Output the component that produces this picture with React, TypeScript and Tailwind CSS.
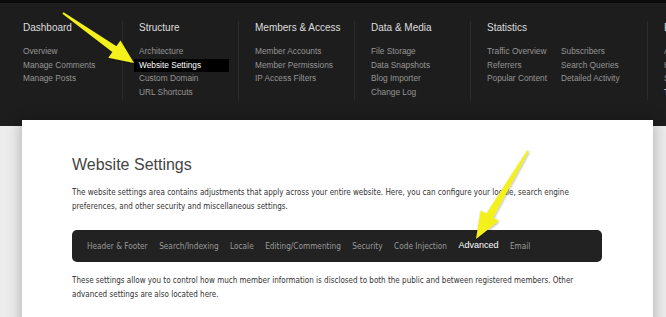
import React from 'react'

type Pt = [number, number]

const menu = [
  { title: 'Dashboard', width: 'w-[116px]', cols: [['Overview', 'Manage Comments', 'Manage Posts']] },
  { title: 'Structure', width: 'w-[116px]', cols: [['Architecture', 'Website Settings', 'Custom Domain', 'URL Shortcuts']] },
  { title: 'Members & Access', width: 'w-[116px]', cols: [['Member Accounts', 'Member Permissions', 'IP Access Filters']] },
  { title: 'Data & Media', width: 'w-[116px]', cols: [['File Storage', 'Data Snapshots', 'Blog Importer', 'Change Log']] },
  {
    title: 'Statistics',
    width: 'w-[177px]',
    cols: [
      ['Traffic Overview', 'Referrers', 'Popular Content'],
      ['Subscribers', 'Search Queries', 'Detailed Activity'],
    ],
  },
  { title: 'Extras', width: 'w-[116px]', cols: [['Apps', 'Help', 'Support', 'Themes']] },
]

const tabs = ['Header & Footer', 'Search/Indexing', 'Locale', 'Editing/Commenting', 'Security', 'Code Injection', 'Advanced', 'Email']

// tapered arrow: thin tail, wider shaft, triangular head
const arrowPoints = (tail: Pt, tip: Pt, headLen: number, headW: number, tailW: number, neckW: number) => {
  const dx = tip[0] - tail[0]
  const dy = tip[1] - tail[1]
  const len = Math.hypot(dx, dy)
  const ux = dx / len
  const uy = dy / len
  const nx = -uy
  const ny = ux
  const bx = tip[0] - ux * headLen
  const by = tip[1] - uy * headLen
  const p = (x: number, y: number, w: number, s: number) => `${x + nx * w * s},${y + ny * w * s}`
  return [
    p(tail[0], tail[1], tailW / 2, 1),
    p(bx, by, neckW / 2, 1),
    p(bx, by, headW / 2, 1),
    `${tip[0]},${tip[1]}`,
    p(bx, by, headW / 2, -1),
    p(bx, by, neckW / 2, -1),
    p(tail[0], tail[1], tailW / 2, -1),
  ].join(' ')
}

const App = () => {
  return (
    <div className="relative w-[666px] h-[317px] overflow-hidden bg-[#ececec]">
      <div className="h-[126px] bg-[#1d1d1d] border-t-[3px] border-[#0b0b0b] font-['Liberation_Sans',Arial,sans-serif] overflow-hidden">
        <div className="flex pl-[6px] pt-[18px] w-[900px]">
          {menu.map((m, i) => (
            <div
              key={m.title}
              className={`${m.width} shrink-0 pl-4 border-l ${i === 0 ? 'border-transparent' : 'border-[#2c2c2c]'}`}
            >
              <div className="text-[10px] leading-[14px] text-[#dedede] mb-[10px]">{m.title}</div>
              <div className="flex">
                {m.cols.map((col, ci) => (
                  <div key={ci} className="w-[74px]">
                    {col.map((item) =>
                      item === 'Website Settings' ? (
                        <div key={item} className="-ml-[5px] pl-[5px] w-[95px] bg-black text-white text-[8.3px] leading-[13.7px]">
                          {item}
                        </div>
                      ) : (
                        <div
                          key={item}
                          className={`text-[8.3px] leading-[13.7px] whitespace-nowrap ${item === 'Themes' ? 'text-[#e5e5e5]' : 'text-[#959595]'}`}
                        >
                          {item}
                        </div>
                      )
                    )}
                  </div>
                ))}
              </div>
            </div>
          ))}
        </div>
      </div>

      <div className="relative z-10 -mt-[6px] ml-[22px] w-[631px] h-[220px] bg-white shadow-[0_0_14px_rgba(0,0,0,0.28)] pl-[50px] pt-[35px]">
        <h1 className="font-['Liberation_Sans',Arial,sans-serif] text-[16px] leading-[20px] text-[#444]">Website Settings</h1>
        <p className="mt-[11px] w-[518px] font-['DejaVu_Sans_Condensed','DejaVu_Sans',sans-serif] text-[8px] leading-[14px] text-[#333]">
          The website settings area contains adjustments that apply across your entire website. Here, you can configure your locale, search engine preferences, and other security and miscellaneous settings.
        </p>
        <div className="mt-[16px] w-[530px] h-[32px] rounded-[5px] bg-[#222] flex items-center gap-[11.5px] px-[15px]">
          {tabs.map((t) =>
            t === 'Advanced' ? (
              <span key={t} className="font-['Liberation_Sans',Arial,sans-serif] text-[9px] text-white">
                {t}
              </span>
            ) : (
              <span key={t} className="font-['DejaVu_Sans_Condensed','DejaVu_Sans',sans-serif] text-[8.2px] text-[#9a9a9a] whitespace-nowrap">
                {t}
              </span>
            )
          )}
        </div>
        <p className="mt-[12px] w-[522px] font-['DejaVu_Sans_Condensed','DejaVu_Sans',sans-serif] text-[8px] leading-[13.5px] text-[#333]">
          These settings allow you to control how much member information is disclosed to both the public and between registered members. Other advanced settings are also located here.
        </p>
      </div>

      <svg className="absolute left-0 top-0 z-20 pointer-events-none" width="666" height="317">
        <defs>
          <filter id="sh" x="-20%" y="-20%" width="140%" height="140%">
            <feDropShadow dx="0.5" dy="0.8" stdDeviation="0.8" floodColor="#000" floodOpacity="0.35" />
          </filter>
        </defs>
        <polygon points={arrowPoints([63, 13], [134, 63], 24, 21, 2, 7)} fill="#f3f01c" filter="url(#sh)" />
        <polygon points={arrowPoints([528, 151], [476, 239], 27, 21, 2, 8)} fill="#f3f01c" filter="url(#sh)" />
      </svg>
    </div>
  )
}

export default App
